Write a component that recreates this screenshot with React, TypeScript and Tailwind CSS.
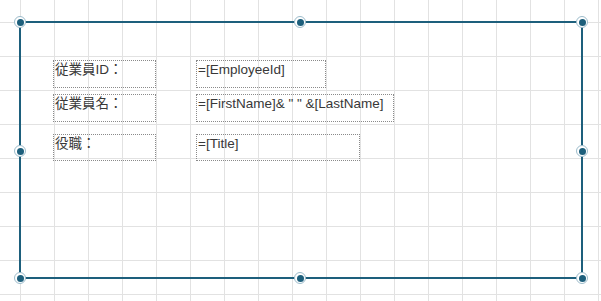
import React from "react";

interface Field {
  label: string;
  expr: string;
  exprWidth: string;
  rowClass: string;
}

const FIELDS: Field[] = [
  { label: "従業員ID：", expr: "=[EmployeeId]", exprWidth: "w-[130px]", rowClass: "h-[28px]" },
  { label: "従業員名：", expr: '=[FirstName]& " " &[LastName]', exprWidth: "w-[198px]", rowClass: "h-[28px] mt-[6px]" },
  { label: "役職：", expr: "=[Title]", exprWidth: "w-[164px]", rowClass: "h-[27px] mt-[12px]" },
];

// selection handle
const Handle: React.FC<{ className: string }> = ({ className }) => (
  <div
    className={`absolute w-[12px] h-[12px] rounded-full bg-white border border-[#9dbccb] flex items-center justify-center ${className}`}
  >
    <div className="w-[7px] h-[7px] rounded-full bg-[#1d5f7c]" />
  </div>
);

const App: React.FC = () => {
  return (
    <div className="w-[601px] h-[301px] overflow-hidden bg-white bg-[linear-gradient(to_right,#e2e2e2_1px,transparent_1px),linear-gradient(to_bottom,#e2e2e2_1px,transparent_1px)] bg-[size:34px_34px] bg-[position:20px_22px] pl-[19px] pt-[21px] font-['Liberation_Sans','Noto_Sans_CJK_JP',sans-serif]">
      {/* Report body */}
      <div className="relative w-[564px] h-[258px] border-2 border-[#1d5f7c] pt-[37px] pl-[32px] flex flex-col">
        {FIELDS.map((f) => (
          <div key={f.label} className={`flex gap-[40px] ${f.rowClass}`}>
            <div className="w-[103px] h-full border border-dotted border-[#8a8a8a] text-[13.5px] leading-[18px] text-[#383838] pl-[1px] whitespace-nowrap">
              {f.label}
            </div>
            <div className={`${f.exprWidth} h-full border border-dotted border-[#8a8a8a] text-[13.5px] leading-[18px] text-[#383838] pl-[1px] whitespace-nowrap`}>
              {f.expr}
            </div>
          </div>
        ))}

        <Handle className="-left-[7px] -top-[7px]" />
        <Handle className="left-[273px] -top-[7px]" />
        <Handle className="-right-[7px] -top-[7px]" />
        <Handle className="-left-[7px] top-[122px]" />
        <Handle className="-right-[7px] top-[122px]" />
        <Handle className="-left-[7px] -bottom-[7px]" />
        <Handle className="left-[273px] -bottom-[7px]" />
        <Handle className="-right-[7px] -bottom-[7px]" />
      </div>
    </div>
  );
};

export default App;
